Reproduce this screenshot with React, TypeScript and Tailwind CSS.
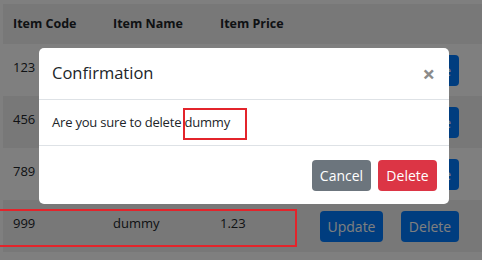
import React from "react";

const rows = [
  { code: "123", name: "", price: "", striped: false },
  { code: "456", name: "", price: "", striped: true },
  { code: "789", name: "", price: "", striped: false },
  { code: "999", name: "dummy", price: "1.23", striped: true },
];

export default function App() {
  return (
    <div
      className="relative w-[482px] h-[260px] overflow-hidden bg-white text-[#212529]"
      style={{ fontFamily: '"Open Sans", "Noto Sans", sans-serif' }}
    >
      {/* page underneath */}
      <div className="pt-[4px] pl-[3px]">
        <div className="flex h-[40px] items-center bg-[#f0f0f0] pl-[10px] text-[12.5px] font-bold">
          <div className="w-[100px]">Item Code</div>
          <div className="w-[107px]">Item Name</div>
          <div className="w-[100px]">Item Price</div>
        </div>
        {rows.map((r) => (
          <div
            key={r.code}
            className={`flex h-[52px] items-center pl-[10px] text-[13px] ${r.striped ? "bg-[#f0f0f0]" : ""}`}
          >
            <div className="w-[100px] -mt-[5px]">{r.code}</div>
            <div className="w-[107px] -mt-[5px]">{r.name}</div>
            <div className="w-[100px] -mt-[5px]">{r.price}</div>
            <div className="flex gap-[18px]">
              <button className="h-[31px] w-[63px] rounded-[4px] bg-[#007bff] text-[14px] text-white">
                Update
              </button>
              <button className="h-[31px] w-[58px] rounded-[4px] bg-[#007bff] text-[14px] text-white">
                Delete
              </button>
            </div>
          </div>
        ))}
      </div>

      {/* backdrop */}
      <div className="absolute inset-0 bg-black/50" />

      {/* annotation around row */}
      <div className="absolute left-[-4px] top-[209px] h-[38px] w-[301px] border-2 border-[#e3242b]" />

      {/* modal */}
      <div className="absolute left-[39px] top-[48px] flex h-[156px] w-[410px] flex-col rounded-[5px] bg-white">
        <div className="flex h-[52px] items-center justify-between border-b border-[#dee2e6] pl-[13px] pr-[14px]">
          <div className="text-[16.5px] font-medium text-[#212529]">Confirmation</div>
          <div className="text-[22px] font-bold leading-none text-[#8a8a8a] -mt-[2px]">×</div>
        </div>
        <div className="flex h-[46px] items-center border-b border-[#dee2e6] pl-[13px] text-[13px] tracking-[-0.2px] text-[#212529]">
          <span>Are you sure to delete&nbsp;</span>
          <span>dummy</span>
        </div>
        <div className="flex flex-1 items-center justify-end gap-[7px] pr-[12px]">
          <button className="h-[31px] w-[59px] rounded-[4px] bg-[#6c757d] text-[14px] text-white">
            Cancel
          </button>
          <button className="h-[31px] w-[59px] rounded-[4px] bg-[#dc3545] text-[14px] text-white">
            Delete
          </button>
        </div>
      </div>

      {/* annotation around word */}
      <div className="absolute left-[183px] top-[108px] h-[32px] w-[64px] border-2 border-[#e3242b]" />
    </div>
  );
}
